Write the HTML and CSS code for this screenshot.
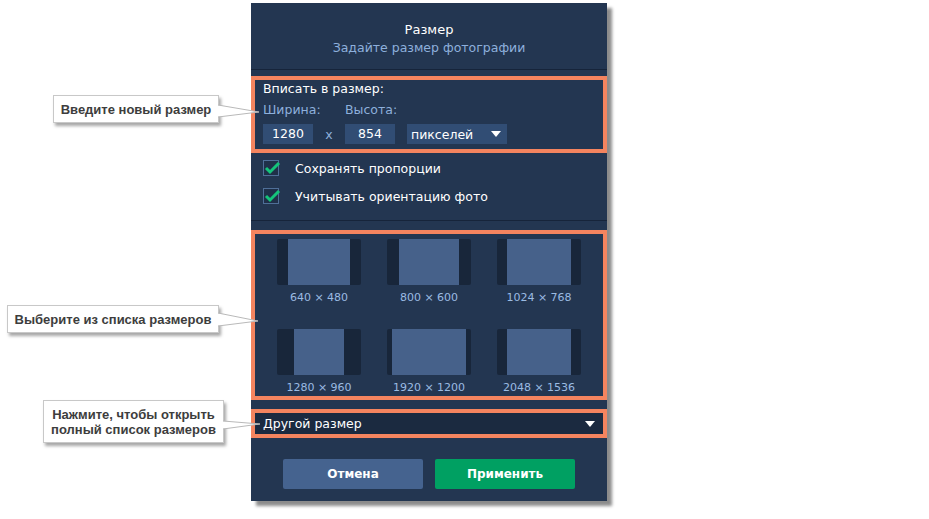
FILE: index.html
```html
<!DOCTYPE html>
<html lang="ru">
<head>
  <meta charset="UTF-8" />
  <meta name="viewport" content="width=device-width, initial-scale=1.0" />
  <title>Размер</title>
  <link rel="stylesheet" href="styles.css">
</head>
<body>

  <div class="page">
    <div class="dialog">
      <div class="dialog-header">
        <div class="dialog-title">Размер</div>
        <div class="dialog-subtitle">Задайте размер фотографии</div>
      </div>

      <div class="fit-box hl">
        <div class="fit-heading">Вписать в размер:</div>
        <div class="fit-labels">
          <span class="fit-label first">Ширина:</span>
          <span class="fit-label">Высота:</span>
        </div>
        <div class="fit-inputs">
          <div class="num-input">1280</div>
          <span class="times">x</span>
          <div class="num-input">854</div>
          <div class="unit-select">
            <span>пикселей</span>
            <span class="arrow"></span>
          </div>
        </div>
      </div>

      <div class="options">
        <label class="option">
          <span class="checkbox">
            <svg width="18" height="16" viewBox="0 0 18 16"><path d="M3 8 L7 12 L16 3" fill="none" stroke="#14c47a" stroke-width="3"/></svg>
          </span>
          Сохранять пропорции
        </label>
        <label class="option">
          <span class="checkbox">
            <svg width="18" height="16" viewBox="0 0 18 16"><path d="M3 8 L7 12 L16 3" fill="none" stroke="#14c47a" stroke-width="3"/></svg>
          </span>
          Учитывать ориентацию фото
        </label>
      </div>

      <div class="presets hl">
        <div class="preset"><div class="thumb"><div class="fill w62"></div></div><div class="preset-label">640 × 480</div></div>
        <div class="preset"><div class="thumb"><div class="fill w60"></div></div><div class="preset-label">800 × 600</div></div>
        <div class="preset"><div class="thumb"><div class="fill w64"></div></div><div class="preset-label">1024 × 768</div></div>
        <div class="preset"><div class="thumb"><div class="fill w50"></div></div><div class="preset-label">1280 × 960</div></div>
        <div class="preset"><div class="thumb"><div class="fill w74"></div></div><div class="preset-label">1920 × 1200</div></div>
        <div class="preset"><div class="thumb"><div class="fill w64"></div></div><div class="preset-label">2048 × 1536</div></div>
      </div>

      <div class="other-size hl">
        <span>Другой размер</span>
        <span class="arrow"></span>
      </div>

      <div class="actions">
        <button class="btn btn-cancel">Отмена</button>
        <button class="btn btn-apply">Применить</button>
      </div>
    </div>

    <!-- annotation callouts -->
    <div class="callout callout-1">Введите новый размер</div>
    <div class="callout callout-2">Выберите из списка размеров</div>
    <div class="callout callout-3">Нажмите, чтобы открыть<br>полный список размеров</div>

    <svg class="pointers" width="929" height="519" viewBox="0 0 929 519">
      <polygon points="216,105 259,112 216,117" fill="#fff"/>
      <polyline points="218,105 259,112 218,117" fill="none" stroke="#b9b9b9"/>
      <polygon points="216,313 258,321 216,326" fill="#fff"/>
      <polyline points="218,313 258,321 218,326" fill="none" stroke="#b9b9b9"/>
      <polygon points="221,421 260,424 221,429" fill="#fff"/>
      <polyline points="223,421 260,424 223,429" fill="none" stroke="#b9b9b9"/>
    </svg>
  </div>

</body>
</html>
```

FILE: styles.css
```css
body {
  margin: 0;
  background: #ffffff;
  font-family: 'DejaVu Sans', Verdana, sans-serif;
}

.page {
  position: relative;
  width: 929px;
  height: 519px;
  padding: 3px 0 0 251px;
  box-sizing: border-box;
}

.dialog {
  width: 356px;
  height: 498px;
  background: #233651;
  box-shadow: 5px 5px 3px rgba(0, 0, 0, 0.45);
  color: #ffffff;
  font-size: 12.5px;
  display: flex;
  flex-direction: column;
}

.dialog-header {
  height: 67px;
  padding-top: 18px;
  box-sizing: border-box;
  border-bottom: 1px solid #16243a;
  text-align: center;
}

.dialog-title {
  font-size: 13px;
  line-height: 18px;
}

.dialog-subtitle {
  font-size: 12.5px;
  line-height: 17px;
  color: #8eb0dc;
}

.hl {
  border: 4px solid #f4845f;
}

.fit-box {
  margin-top: 6px;
  height: 77px;
  box-sizing: border-box;
  padding: 1px 8px 0;
}

.fit-heading {
  line-height: 16px;
}

.fit-labels {
  display: flex;
  margin-top: 5px;
  line-height: 16px;
  color: #8eb0dc;
}

.fit-label.first {
  width: 82px;
}

.fit-inputs {
  display: flex;
  align-items: center;
  margin-top: 6px;
  height: 20px;
}

.num-input {
  width: 50px;
  height: 20px;
  line-height: 20px;
  background: #314d74;
  text-align: center;
}

.times {
  width: 32px;
  text-align: center;
  color: #8eb0dc;
}

.unit-select {
  margin-left: 12px;
  width: 100px;
  height: 20px;
  background: #314d74;
  display: flex;
  align-items: center;
  justify-content: space-between;
  padding: 0 6px 0 4px;
  box-sizing: border-box;
}

.arrow {
  width: 0;
  height: 0;
  border-left: 5px solid transparent;
  border-right: 5px solid transparent;
  border-top: 6px solid #ffffff;
}

.options {
  padding: 1px 12px 10px;
  border-bottom: 1px solid #16243a;
}

.option {
  display: flex;
  align-items: center;
  height: 28px;
}

.checkbox {
  width: 14px;
  height: 14px;
  border: 1px solid #4f6f98;
  background: #1f3049;
  margin-right: 16px;
  position: relative;
}

.checkbox svg {
  position: absolute;
  left: -1px;
  top: -1px;
}

.presets {
  margin-top: 9px;
  height: 170px;
  box-sizing: border-box;
  padding: 5px 22px 0;
  display: grid;
  grid-template-columns: repeat(3, 84px);
  column-gap: 26px;
  row-gap: 23px;
  align-content: start;
}

.preset {
  display: flex;
  flex-direction: column;
  align-items: center;
}

.thumb {
  width: 84px;
  height: 46px;
  border-radius: 2px;
  background: #18263a;
  display: flex;
  justify-content: center;
}

.fill {
  height: 46px;
  background: #46618a;
}

.w50 { width: 50px; }
.w60 { width: 60px; }
.w62 { width: 62px; }
.w64 { width: 64px; }
.w74 { width: 74px; }

.preset-label {
  margin-top: 5px;
  line-height: 16px;
  font-size: 11px;
  color: #9bbbe2;
  white-space: nowrap;
}

.other-size {
  margin-top: 9px;
  height: 29px;
  box-sizing: border-box;
  background: #1b2a40;
  display: flex;
  align-items: center;
  justify-content: space-between;
  padding: 0 8px;
}

.actions {
  margin-top: 21px;
  display: flex;
  justify-content: center;
  gap: 12px;
}

.btn {
  width: 140px;
  height: 30px;
  border: none;
  border-radius: 2px;
  color: #ffffff;
  font-family: 'DejaVu Sans', Verdana, sans-serif;
  font-weight: bold;
  font-size: 12px;
}

.btn-cancel {
  background: #45638f;
}

.btn-apply {
  background: #00a062;
}

.callout {
  position: absolute;
  background: #ffffff;
  border: 1px solid #c8c8c8;
  box-shadow: 2px 3px 3px rgba(0, 0, 0, 0.35);
  font-family: 'Liberation Sans', Arial, sans-serif;
  font-weight: bold;
  font-size: 13px;
  color: #3d3d3d;
  box-sizing: border-box;
  display: flex;
  align-items: center;
  justify-content: center;
  text-align: center;
  z-index: 2;
}

.callout-1 {
  left: 53px;
  top: 95px;
  width: 166px;
  height: 28px;
}

.callout-2 {
  left: 7px;
  top: 305px;
  width: 212px;
  height: 28px;
}

.callout-3 {
  left: 43px;
  top: 400px;
  width: 181px;
  height: 43px;
  line-height: 15px;
}

.pointers {
  position: absolute;
  left: 0;
  top: 0;
  z-index: 3;
}
```
